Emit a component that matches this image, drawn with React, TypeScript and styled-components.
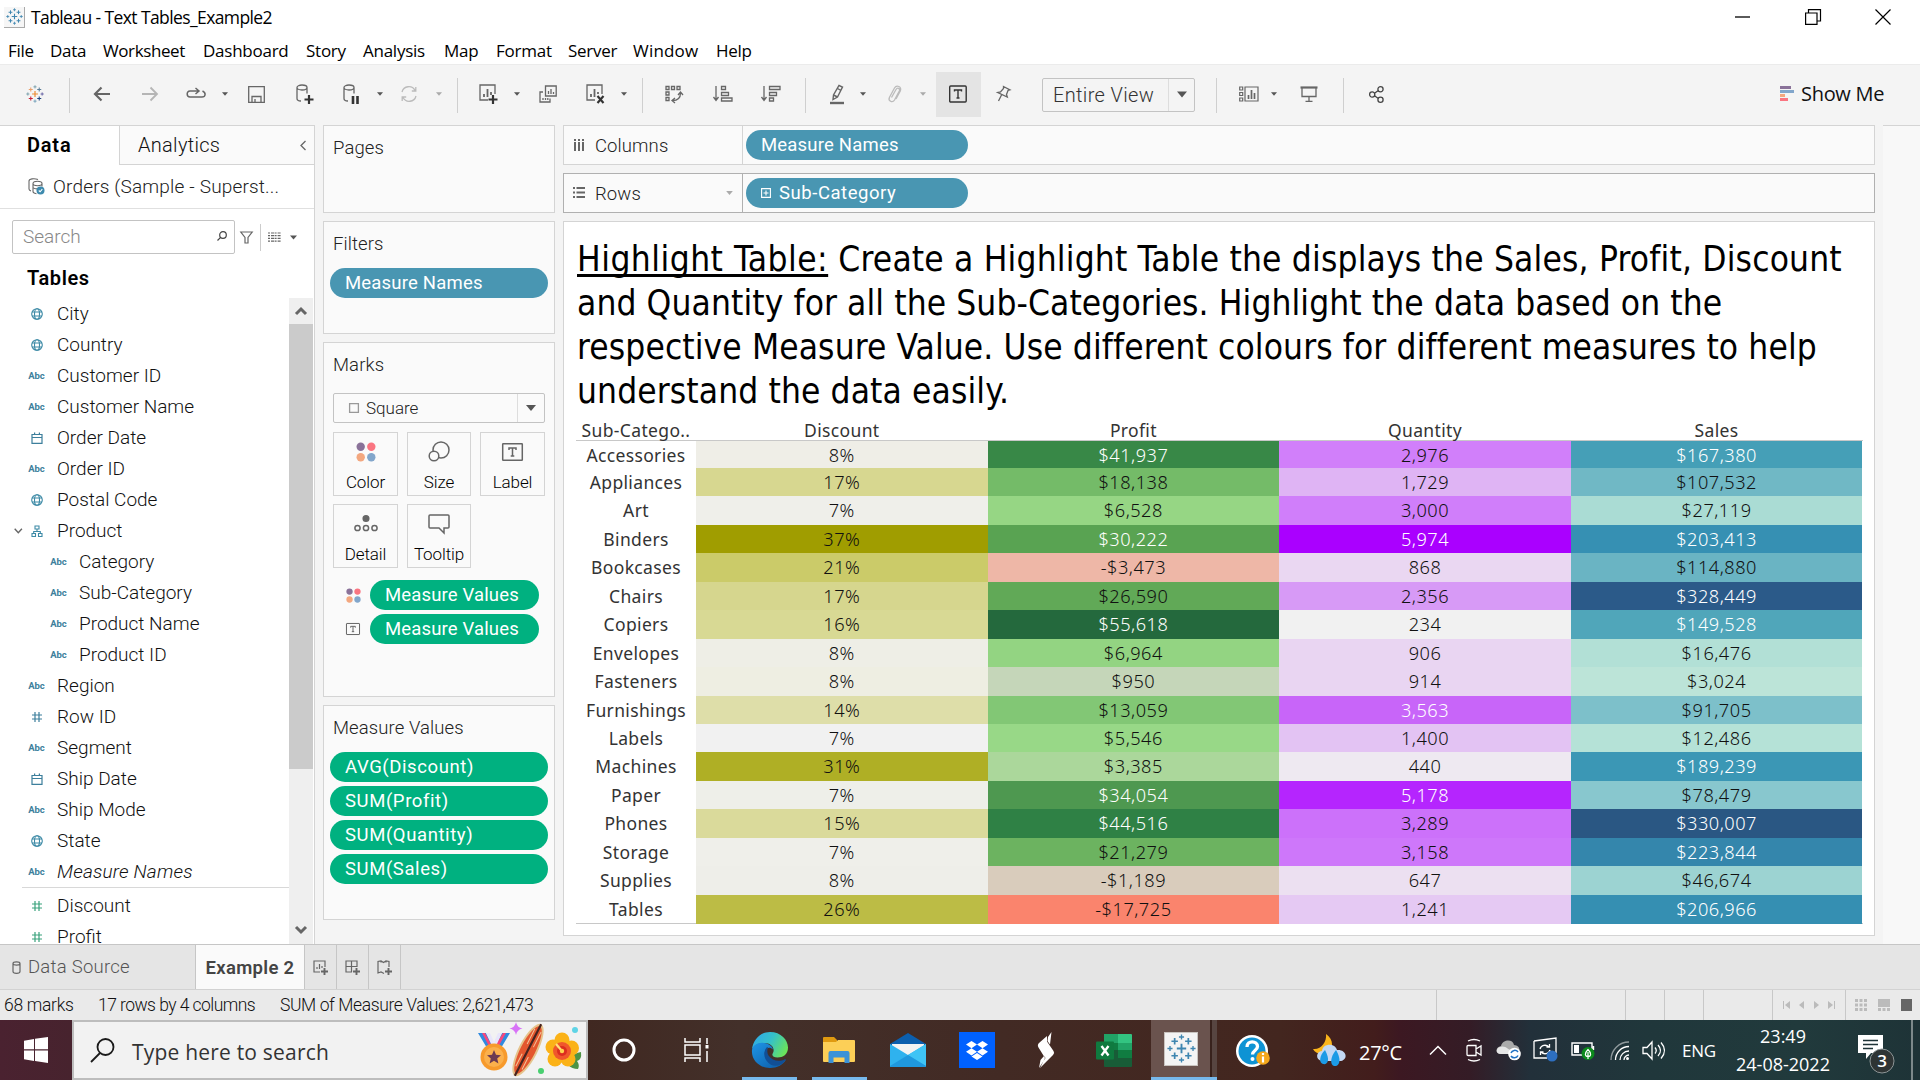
import React from 'react';
import styled, { createGlobalStyle, css } from 'styled-components';

const UI = '"Roboto", "Open Sans", sans-serif';
const SYS = '"Open Sans", "Noto Sans", sans-serif';

const Global = createGlobalStyle`
  *, *::before, *::after { box-sizing: border-box; }
  html, body { margin: 0; padding: 0; }
  body { width: 1920px; height: 1080px; overflow: hidden; background: #f4f4f4; font-family: ${UI}; color: #111; }
  svg { display: block; flex: none; overflow: visible; }
`;

const Screen = styled.div`
  width: 1920px;
  height: 1080px;
  display: flex;
  flex-direction: column;
  overflow: hidden;
  white-space: nowrap;
`;

/* ---------- title bar and menu ---------- */
const TitleBar = styled.header`
  height: 34px;
  display: flex;
  align-items: center;
  padding-left: 4px;
  background: #fff;
  font: 400 17.5px/34px ${SYS};
  letter-spacing: -0.6px;
  color: #000;
`;
const AppBadge = styled.span`
  width: 21px;
  height: 21px;
  display: flex;
  align-items: center;
  justify-content: center;
  background: #f6f6f6;
  border-right: 1px solid #aaa;
  border-bottom: 1px solid #aaa;
  margin-right: 6px;
`;
const WindowTitle = styled.span`
  flex: 1;
`;
const WindowButtons = styled.div`
  display: flex;
  gap: 54px;
  align-items: center;
  padding-right: 29px;
`;
const MenuBar = styled.nav`
  height: 30px;
  display: flex;
  background: #fff;
  padding-left: 8px;
  font: 400 17px/33px ${SYS};
  color: #000;
`;
const MenuItem = styled.span<{ $w: number; $ls?: number }>`
  width: ${p => p.$w}px;
  letter-spacing: ${p => p.$ls ?? -0.25}px;
`;

/* ---------- toolbar ---------- */
const ToolBar = styled.div`
  height: 61px;
  display: flex;
  align-items: center;
  background: #f4f4f4;
  border-top: 1px solid #ebebeb;
  padding-bottom: 2px;
`;
const Slot = styled.span<{ $gap: number; $w: number }>`
  flex: none;
  margin-left: ${p => p.$gap}px;
  width: ${p => p.$w}px;
  display: flex;
  justify-content: center;
`;
const Divider = styled.span<{ $gap: number }>`
  flex: none;
  margin-left: ${p => p.$gap}px;
  width: 1px;
  height: 35px;
  margin-top: 3px;
  background: #cfcfcf;
`;
const ActiveTool = styled.span`
  flex: none;
  margin-left: 9px;
  width: 45px;
  height: 45px;
  background: #e4e4e4;
  display: flex;
  align-items: center;
  justify-content: center;
  padding: 0 2px 1px 0;
`;
const ViewSelect = styled.div`
  flex: none;
  margin: 1px 0 0 30px;
  width: 153px;
  height: 34px;
  display: flex;
  border: 1px solid #c3c3c3;
  border-radius: 2px;
  font: 350 20px/33px ${UI};
  letter-spacing: 0.35px;
  color: #333;
`;
const SelectText = styled.span`
  flex: 1;
  padding-left: 10px;
`;
const SelectArrow = styled.span<{ $w: number }>`
  width: ${p => p.$w}px;
  display: flex;
  align-items: center;
  justify-content: center;
  border-left: 1px solid #ddd;
`;
const ShowMe = styled.span`
  margin-left: 7px;
  font: 400 20px/34px ${SYS};
  letter-spacing: -0.3px;
  color: #111;
`;

/* ---------- workspace ---------- */
const Workspace = styled.main`
  height: 819px;
  display: flex;
  align-items: flex-start;
  background: #f4f4f4;
`;
const DataPane = styled.aside`
  width: 315px;
  height: 819px;
  display: flex;
  flex-direction: column;
  background: #fff;
  border-right: 1px solid #d4d4d4;
  overflow: hidden;
  flex: none;
`;
const PaneTabs = styled.div`
  height: 40px;
  flex: none;
  display: flex;
  border-top: 1px solid #d4d4d4;
  font-size: 20px;
  line-height: 39px;
`;
const DataTab = styled.span`
  width: 119px;
  padding-left: 27px;
  font-weight: 600;
  letter-spacing: 0.8px;
  color: #000;
`;
const AnalyticsTab = styled.span`
  flex: 1;
  display: flex;
  justify-content: space-between;
  align-items: center;
  padding: 0 8px 0 18px;
  background: #fafafa;
  border-left: 1px solid #d4d4d4;
  border-bottom: 1px solid #d4d4d4;
  font-weight: 350;
  letter-spacing: 0.3px;
`;
const SourceRow = styled.div`
  height: 44px;
  flex: none;
  display: flex;
  align-items: center;
  gap: 8px;
  padding-left: 28px;
  border-bottom: 1px solid #e0e0e0;
  font-size: 19px;
  font-weight: 300;
  letter-spacing: 0.17px;
  color: #222;
`;
const SearchRow = styled.div`
  height: 34px;
  flex: none;
  margin: 11px 0 0 12px;
  display: flex;
  align-items: center;
`;
const SearchBox = styled.div`
  width: 223px;
  height: 34px;
  display: flex;
  align-items: center;
  justify-content: space-between;
  padding: 0 7px 2px 10px;
  border: 1px solid #c3c3c3;
  border-radius: 2px;
  font-size: 19px;
  font-weight: 300;
  color: #888;
`;
const ThinRule = styled.span`
  width: 1px;
  height: 27px;
  margin: 0 7px;
  background: #ccc;
`;
const FieldArea = styled.div`
  flex: 1;
  display: flex;
  justify-content: space-between;
`;
const TablesTitle = styled.h2`
  margin: 0;
  height: 44px;
  flex: none;
  padding-left: 27px;
  font-size: 20px;
  font-weight: 600;
  line-height: 48px;
  letter-spacing: 0.6px;
  color: #000;
`;
const FieldList = styled.ul`
  margin: 0;
  padding: 0;
  list-style: none;
`;
const Field = styled.li<{ $child?: boolean; $em?: boolean }>`
  height: 31px;
  width: 289px;
  display: flex;
  align-items: center;
  padding-left: ${p => (p.$child ? 36 : 14)}px;
  font-size: 19px;
  font-weight: 350;
  line-height: 30px;
  letter-spacing: ${p => (p.$em ? 0.2 : 0)}px;
  ${p => p.$em && css`font-style: italic;`}
`;
const Expander = styled.span`
  width: 14px;
  flex: none;
  display: flex;
`;
const TypeIcon = styled.span`
  width: 17px;
  flex: none;
  display: flex;
  justify-content: center;
  margin-right: 12px;
`;
const Abc = styled.span`
  font: normal 700 9.5px/31px ${UI};
  letter-spacing: -0.1px;
  color: #3d7f9c;
`;
const FieldRule = styled.li`
  height: 1px;
  margin: 0 0 2px 22px;
  background: #d8d8d8;
`;
const ScrollBar = styled.div`
  width: 24px;
  margin-right: 1px;
  display: flex;
  flex-direction: column;
  align-items: center;
  background: #efefef;
`;
const ScrollButton = styled.span`
  height: 26px;
  display: flex;
  align-items: center;
`;
const ScrollThumb = styled.span`
  width: 24px;
  height: 445px;
  margin-bottom: 148px;
  background: #cbcbcb;
`;

const CardColumn = styled.section`
  width: 232px;
  margin-left: 8px;
  flex: none;
  display: flex;
  flex-direction: column;
  gap: 8px;
`;
const Card = styled.div<{ $h: number }>`
  height: ${p => p.$h}px;
  border: 1px solid #d4d4d4;
  background: #fafafa;
  padding: 0 6px;
`;
const CardTitle = styled.div`
  padding-left: 3px;
  height: 46px;
  font-size: 18.5px;
  font-weight: 300;
  line-height: 45px;
  letter-spacing: 0.1px;
  color: #222;
`;
const Pill = styled.div<{ $w: number; $green?: boolean; $ls?: number }>`
  width: ${p => p.$w}px;
  height: 30px;
  flex: none;
  border-radius: 15px;
  display: flex;
  align-items: center;
  gap: 8px;
  padding-left: 15px;
  background: ${p => (p.$green ? '#00b180' : '#4996b2')};
  color: #fff;
  font: 400 18.5px/31px ${UI};
  letter-spacing: ${p => p.$ls ?? 0.2}px;
`;
const PillStack = styled.div`
  display: flex;
  flex-direction: column;
  gap: 4px;
`;
const PillRow = styled.div`
  display: flex;
  align-items: center;
  padding-left: 16px;
`;
const PillIcon = styled.span`
  width: 24px;
  display: flex;
`;
const MarkSelect = styled.div`
  width: 212px;
  height: 30px;
  margin: 4px 0 9px 3px;
  display: flex;
  align-items: stretch;
  border: 1px solid #c3c3c3;
  border-radius: 2px;
  font-size: 17px;
  font-weight: 300;
  line-height: 28px;
  color: #222;
`;
const MarkName = styled.span`
  flex: 1;
  display: flex;
  align-items: center;
  gap: 7px;
  padding-left: 15px;
`;
const MarkGrid = styled.div`
  display: grid;
  grid-template-columns: 65px 64px 65px;
  grid-auto-rows: 64px;
  gap: 8px 9px;
  padding-left: 3px;
  margin-bottom: 12px;
`;
const MarkButton = styled.div`
  display: flex;
  flex-direction: column;
  align-items: center;
  justify-content: space-between;
  border: 1px solid #d4d4d4;
  font-size: 17px;
  font-weight: 350;
  line-height: 24px;
  letter-spacing: -0.1px;
  color: #000;
  padding-bottom: 1px;
`;
const MarkIcon = styled.span`
  height: 38px;
  display: flex;
  align-items: center;
`;

const ViewColumn = styled.section`
  width: 1312px;
  margin-left: 8px;
  flex: none;
  display: flex;
  flex-direction: column;
  gap: 8px;
`;
const Shelf = styled.div<{ $dark?: boolean }>`
  height: 40px;
  display: flex;
  align-items: center;
  border: 1px solid ${p => (p.$dark ? '#b0b0b0' : '#d4d4d4')};
  background: #fafafa;
`;
const ShelfLabel = styled.div<{ $dark?: boolean }>`
  width: 179px;
  height: 38px;
  margin-right: 3px;
  display: flex;
  align-items: center;
  gap: 10px;
  padding: 0 9px;
  border-right: 1px solid ${p => (p.$dark ? '#b0b0b0' : '#d4d4d4')};
  font-size: 18.5px;
  font-weight: 300;
  line-height: 38px;
  letter-spacing: 0.1px;
  color: #222;
`;
const ShelfName = styled.span`
  flex: 1;
  padding-top: 1px;
`;
const Viz = styled.article`
  height: 715px;
  border: 1px solid #d4d4d4;
  background: #fff;
  padding: 15px 11px 0 12px;
`;
const VizTitle = styled.h1`
  margin: 0;
  padding-left: 1px;
  font: 400 35px/44px "DejaVu Sans Condensed", "DejaVu Sans", sans-serif;
  font-stretch: condensed;
  color: #000;
`;
const TitleLine = styled.span<{ $ls: number }>`
  display: block;
  letter-spacing: ${p => p.$ls}px;
`;
const Underlined = styled.span`
  letter-spacing: 0.47px;
  text-decoration: underline;
  text-decoration-thickness: 3px;
  text-underline-offset: 3px;
  text-decoration-skip-ink: none;
`;
const HeatRow = styled.div<{ $first?: boolean }>`
  height: ${p => (p.$first ? '27px' : '28.44px')};
  display: grid;
  grid-template-columns: 120px repeat(4, 291.6px);
  line-height: ${p => (p.$first ? '28px' : '29.5px')};
`;
const HeadRow = styled(HeatRow)`
  height: 28px;
  border-bottom: 1px solid #c8c8c8;
  font: 400 17.5px/34px "Noto Sans", sans-serif;
  letter-spacing: 0.35px;
  color: #333;
  text-align: center;
`;
const RowName = styled.span`
  font-family: "Noto Sans", sans-serif;
  font-size: 17.5px;
  letter-spacing: 0.35px;
  color: #333;
  text-align: center;
`;
const HeatCell = styled.span<{ $bg: string; $light?: boolean }>`
  background: ${p => p.$bg};
  color: ${p => (p.$light ? '#fff' : '#111')};
  font-family: "Noto Sans", sans-serif;
  font-size: 18.2px;
  font-weight: 300;
  letter-spacing: 0.5px;
  text-align: center;
`;
const Heat = styled.div`
  height: 483px;
  border-bottom: 1px solid #c8c8c8;
`;
const SideStrip = styled.div`
  flex: 1;
  margin-left: 8px;
  height: 819px;
  border-top: 1px solid #d4d4d4;
  background: #f8f8f8;
`;

/* ---------- sheet tabs and status ---------- */
const SheetTabs = styled.div`
  height: 46px;
  flex: none;
  display: flex;
  background: #e5e5e5;
  border-top: 1px solid #c6c6c6;
  border-bottom: 1px solid #d2d2d2;
  line-height: 46px;
  font-size: 18.5px;
`;
const SourceTab = styled.span`
  width: 195px;
  display: flex;
  align-items: center;
  gap: 7px;
  padding-left: 12px;
  font-weight: 350;
  letter-spacing: 0.25px;
  color: #555;
`;
const ActiveSheet = styled.span`
  width: 109px;
  text-align: center;
  background: #fafafa;
  border-left: 1px solid #c6c6c6;
  font-weight: 600;
  color: #444;
  letter-spacing: 0.3px;
`;
const NewSheet = styled.span`
  width: 32px;
  display: flex;
  align-items: center;
  justify-content: center;
  border-left: 1px solid #c6c6c6;
  &:last-child { width: 33px; border-right: 1px solid #c6c6c6; }
`;
const StatusBar = styled.footer`
  height: 30px;
  flex: none;
  display: flex;
  background: #eaeaea;
  padding-left: 4px;
  font-size: 17.5px;
  font-weight: 350;
  line-height: 30px;
  letter-spacing: -0.42px;
`;
const StatusText = styled.span<{ $w: number; $ls?: number }>`
  width: ${p => p.$w}px;
  letter-spacing: ${p => p.$ls ?? -0.4}px;
`;
const StatusCell = styled.span<{ $w: number }>`
  width: ${p => p.$w}px;
  display: flex;
  align-items: center;
  justify-content: space-evenly;
  border-left: 1px solid #c8c8c8;
`;
const ViewModes = styled(StatusCell)`
  justify-content: flex-start;
  gap: 11px;
  padding-left: 9px;
`;

/* ---------- taskbar ---------- */
const TaskBar = styled.div`
  height: 60px;
  flex: none;
  display: flex;
  align-items: stretch;
  color: #fff;
  background: linear-gradient(90deg, #4a2230 0, #47232e 72px, #402821 588px, #43302a 740px, #422a24 1000px, #43261f 1280px, #421d1c 1375px, #3c1822 1400px, #341c26 1470px, #22303a 1530px, #20373b 1650px, #213a3c 1800px, #1e3337 1920px);
`;
const Start = styled.span`
  flex: none;
  width: 72px;
  display: flex;
  align-items: center;
  justify-content: center;
`;
const TaskSearch = styled.div`
  width: 516px;
  flex: none;
  display: flex;
  align-items: center;
  padding-left: 16px;
  background: #f2f2f2;
  border: 2px solid #bdbdbd;
`;
const TaskSearchText = styled.span`
  flex: none;
  width: 361px;
  padding-left: 17px;
  padding-top: 4px;
  font: 400 21px/30px ${SYS};
  letter-spacing: 0.2px;
  color: #333;
`;
const Task = styled.span<{ $w: number; $bar?: number }>`
  width: ${p => p.$w}px;
  flex: none;
  display: flex;
  align-items: center;
  justify-content: center;
  ${p => p.$bar && css`background: linear-gradient(#76b9ed, #76b9ed) center bottom / ${p.$bar}px 3px no-repeat;`}
`;
const ActiveTask = styled.span`
  width: 66px;
  flex: none;
  margin-left: 5px;
  display: flex;
  align-items: center;
  padding-left: 13px;
  background: linear-gradient(90deg, #6a534e 59px, #38221d 59px, #38221d 61px, #574541 61px);
  border-bottom: 3px solid #76b9ed;
`;
const AppTile = styled.span`
  width: 34px;
  height: 34px;
  display: flex;
  align-items: center;
  justify-content: center;
  background: #f4f4f4;
  border: 1px solid #c9c4c0;
`;
const Tray = styled.div`
  flex: 1;
  display: flex;
  align-items: center;
  font: 400 18px/28px ${SYS};
`;
const TrayItem = styled.span<{ $gap: number; $w: number }>`
  flex: none;
  margin-left: ${p => p.$gap}px;
  width: ${p => p.$w}px;
  display: flex;
  justify-content: center;
`;
const Temperature = styled.span`
  flex: none;
  width: 44px;
  margin: 5px 0 0 13px;
  font-size: 20px;
  letter-spacing: -0.3px;
`;
const Lang = styled.span`
  flex: none;
  width: 34px;
  margin: 2px 0 0 17px;
  font-size: 17px;
  letter-spacing: -0.3px;
`;
const Clock = styled.div`
  flex: none;
  width: 96px;
  margin-left: 19px;
  display: flex;
  flex-direction: column;
  align-items: center;
`;
const DesktopEdge = styled.span`
  width: 2px;
  height: 60px;
  margin-left: 15px;
  background: #7d898b;
`;

/* ---------- icons ---------- */
const Plus = ({ x, y, r, c, w }: { x: number; y: number; r: number; c: string; w: number }) => (
  <path d={`M${x - r} ${y}H${x + r}M${x} ${y - r}V${y + r}`} stroke={c} strokeWidth={w} />
);
const TableauMark = ({ size, mono }: { size: number; mono?: boolean }) => {
  const k = (c: string) => (mono ? '#3f86b0' : c);
  return (
    <svg width={size} height={size} viewBox="0 0 34 34" fill="none">
      <Plus x={17} y={17} r={5.5} c={k('#eb8a2f')} w={2.2} />
      <Plus x={9} y={8.5} r={3.8} c={k('#e9a06b')} w={2} />
      <Plus x={25} y={8.5} r={3.8} c={k('#5c7f98')} w={2} />
      <Plus x={9} y={25.5} r={3.8} c={k('#c72037')} w={2} />
      <Plus x={25} y={25.5} r={3.8} c={k('#1f447e')} w={2} />
      <Plus x={17} y={3.5} r={3} c={k('#7099a6')} w={1.6} />
      <Plus x={17} y={30.5} r={3} c={k('#6a9ab5')} w={1.6} />
      <Plus x={3.5} y={17} r={3} c={k('#7099a6')} w={1.6} />
      <Plus x={30.5} y={17} r={3} c={k('#59549c')} w={1.6} />
    </svg>
  );
};
const Svg = ({ w = 18, h = 18, c = '#666', sw = 1.3, box, children }: { w?: number; h?: number; c?: string; sw?: number; box?: string; children: React.ReactNode }) => (
  <svg width={w} height={h} viewBox={box ?? `0 0 ${w} ${h}`} fill="none" stroke={c} strokeWidth={sw}>{children}</svg>
);
const Caret = ({ w = 6, h = 4, c = '#555' }: { w?: number; h?: number; c?: string }) => (
  <svg width={w} height={h} viewBox="0 0 10 6"><path d="M0 0H10L5 6Z" fill={c} /></svg>
);
const BigPlus = () => <path d="M14 11v9M9.5 15.5h9" stroke="#333" strokeWidth={2.2} />;
const Cylinder = () => <path d="M2 3.5v11c0 1.5 2 2.500 4 2.500M12 3.500v6M2 3.500c0-1.400 2.200-2.500 5-2.500s5 1.100 5 2.500S9.800 6 7 6 2 4.900 2 3.500Z" />;
const Globe = () => (
  <Svg w={12} h={12} c="#3d8aa6" sw={1.1}><circle cx="6" cy="6" r="5.3" /><ellipse cx="6" cy="6" rx="2.5" ry="5.3" /><path d="M1 4h10M1 8h10" /></Svg>
);
const Calendar = () => <Svg w={12} h={12} c="#3d7f9c" sw={1.2}><path d="M1 2.5h10v8.800H1zM1 5.500h10M3.600.5v2M8.400.5v2" /></Svg>;
const Hash = ({ c = '#3d7f9c' }: { c?: string }) => <Svg w={12} h={12} c={c} sw={1.2}><path d="M4 1v10M8 1v10M1 4h10M1 8h10" /></Svg>;
const Hierarchy = () => <Svg w={12} h={12} c="#3d8aa6" sw={1.1}><path d="M4 1h4v3H4zM1 8.500h3.500v3H1zM7.500 8.500H11v3H7.500zM6 4v2.500M2.700 8.500v-2h6.600v2" /></Svg>;
const FourDots = ({ size }: { size: number }) => (
  <svg width={size} height={size} viewBox="0 0 20 20"><circle cx="4.7" cy="4.7" r="4.2" fill="#8a7299" /><circle cx="15.3" cy="4.7" r="4.2" fill="#fa7581" /><circle cx="4.7" cy="15.3" r="4.2" fill="#f3a77f" /><circle cx="15.3" cy="15.3" r="4.2" fill="#82a6cb" /></svg>
);
const LabelT = ({ w = 21, h = 18, c = '#666' }: { w?: number; h?: number; c?: string }) => (
  <Svg w={w} h={h} box="0 0 21 18" c={c} sw={1.5}><rect x="0.7" y="0.7" width="19.6" height="16.6" rx="0.5" /><path d="M7 7V5h7v2M10.500 5v8M8.700 13h3.600" /></Svg>
);

const menus: [string, number, number?][] = [
  ['File', 42], ['Data', 53, -0.3], ['Worksheet', 100, -0.4], ['Dashboard', 103, -0.25], ['Story', 57], ['Analysis', 81], ['Map', 52], ['Format', 72], ['Server', 65], ['Window', 83, 0.2], ['Help', 40],
];

type F = [string, string, boolean?];
const fields: F[] = [
  ['City', 'g'], ['Country', 'g'], ['Customer ID', 'a'], ['Customer Name', 'a'], ['Order Date', 'd'], ['Order ID', 'a'], ['Postal Code', 'g'], ['Product', 'h'],
  ['Category', 'a', true], ['Sub-Category', 'a', true], ['Product Name', 'a', true], ['Product ID', 'a', true],
  ['Region', 'a'], ['Row ID', 'n'], ['Segment', 'a'], ['Ship Date', 'd'], ['Ship Mode', 'a'], ['State', 'g'], ['Measure Names', 'a'],
];
const typeIcon: Record<string, React.ReactNode> = { g: <Globe />, a: <Abc>Abc</Abc>, d: <Calendar />, h: <Hierarchy />, n: <Hash /> };

type Cell = [string, string, boolean?];
const heat: [string, Cell, Cell, Cell, Cell][] = [
  ['Accessories', ['8%', '#efeee7'], ['$41,937', '#388847', true], ['2,976', '#d17ffa'], ['$167,380', '#459fb7', true]],
  ['Appliances', ['17%', '#d7d790'], ['$18,138', '#74bb68'], ['1,729', '#dfb4f4'], ['$107,532', '#70b8c5']],
  ['Art', ['7%', '#efefea'], ['$6,528', '#96d684'], ['3,000', '#d07efa'], ['$27,119', '#aadcd4']],
  ['Binders', ['37%', '#a09d00'], ['$30,222', '#59a352', true], ['5,974', '#aa00ff', true], ['$203,413', '#3690b3', true]],
  ['Bookcases', ['21%', '#cbcb69'], ['-$3,473', '#eeb7a7'], ['868', '#ead7f2'], ['$114,880', '#6ab4c3']],
  ['Chairs', ['17%', '#d6d68e'], ['$26,590', '#61a957'], ['2,356', '#d79af6'], ['$328,449', '#2b5a89', true]],
  ['Copiers', ['16%', '#d8d994'], ['$55,618', '#24693d', true], ['234', '#f1f1f1'], ['$149,528', '#50a6ba', true]],
  ['Envelopes', ['8%', '#eeeee6'], ['$6,964', '#93d482'], ['906', '#e9d5f2'], ['$16,476', '#b2e0d6']],
  ['Fasteners', ['8%', '#eeeee2'], ['$950', '#c5d6b9'], ['914', '#e9d5f2'], ['$3,024', '#bce4d8']],
  ['Furnishings', ['14%', '#dedea9'], ['$13,059', '#82c775'], ['3,563', '#c865f9', true], ['$91,705', '#7dc0ca']],
  ['Labels', ['7%', '#f1f1f1'], ['$5,546', '#98d887'], ['1,400', '#e3c3f3'], ['$12,486', '#b5e2d7']],
  ['Machines', ['31%', '#afaf25'], ['$3,385', '#abd79b'], ['440', '#eee9f1'], ['$189,239', '#3b97b5', true]],
  ['Paper', ['7%', '#eeefe9'], ['$34,054', '#4e9850', true], ['5,178', '#b525fe', true], ['$78,479', '#88c7ce']],
  ['Phones', ['15%', '#dada9b'], ['$44,516', '#2f8145', true], ['3,289', '#cc71fa'], ['$330,007', '#2a5783', true]],
  ['Storage', ['7%', '#efefea'], ['$21,279', '#6cb360'], ['3,158', '#ce77fa'], ['$223,844', '#3486ac', true]],
  ['Supplies', ['8%', '#eeeee9'], ['-$1,189', '#d9ccbc'], ['647', '#ece0f1'], ['$46,674', '#9cd3d2']],
  ['Tables', ['26%', '#bcbc45'], ['-$17,725', '#fa846d'], ['1,241', '#e5c9f3'], ['$206,966', '#358fb2', true]],
];

const Tools = () => (
  <ToolBar>
    <Slot $gap={25} $w={19}><TableauMark size={18} /></Slot>
    <Divider $gap={25} />
    <Slot $gap={23} $w={18}><Svg sw={2.2}><path d="M17 9H2M8.500 2.500 2 9l6.500 6.500" /></Svg></Slot>
    <Slot $gap={30} $w={18}><Svg c="#b5b5b5" sw={1.8}><path d="M1 9h15M9.500 2.500 16 9l-6.500 6.500" /></Svg></Slot>
    <Slot $gap={27} $w={20}><Svg w={20} sw={1.5}><path d="M16.500 6c4 2 3 6-.5 6H4C.5 12 0 6 4 6h8M9.500 3 13 6l-3.500 3" /></Svg></Slot>
    <Slot $gap={15} $w={8}><Caret /></Slot>
    <Slot $gap={19} $w={17}><Svg w={17} h={17}><path d="M.7.7h15.600v15.600H.7zM4 16v-5.500h9V16M7 16v-3" /></Svg></Slot>
    <Slot $gap={30} $w={18}><Svg h={20}><Cylinder /><BigPlus /></Svg></Slot>
    <Slot $gap={29} $w={18}><Svg h={20}><Cylinder /><path d="M11 12v8M15.500 12v8" stroke="#333" strokeWidth={2.6} /></Svg></Slot>
    <Slot $gap={16} $w={8}><Caret /></Slot>
    <Slot $gap={16} $w={18}><Svg c="#bbb"><path d="M2 7a7 7 0 0 1 13-1.500M16 11A7 7 0 0 1 3 12.500M15.800 2v4h-4M2.200 16v-4h4" /></Svg></Slot>
    <Slot $gap={17} $w={8}><Caret c="#aaa" /></Slot>
    <Divider $gap={14} />
    <Slot $gap={20} $w={20}><Svg w={19} h={20}><path d="M9 16H1V1h15v9" /><path d="M5 13v-3M8.500 13V5M12 11V8" strokeWidth={1.8} /><BigPlus /></Svg></Slot>
    <Slot $gap={15} $w={8}><Caret /></Slot>
    <Slot $gap={18} $w={18}><Svg><path d="M6.500 1h10.700v10H6.500zM4 7H1v10h10v-3.500M9.500 9V6M12 9V4M14.500 9V7M4 15v-2M6.500 15v-2M8.800 15v-2" /></Svg></Slot>
    <Slot $gap={28} $w={20}><Svg w={19} h={20}><path d="M9 16H1V1h15v9" /><path d="M5 13v-3M8.500 13V5M12 10V8" strokeWidth={1.8} /><path d="m11.500 12 6 7M17.500 12l-6 7" stroke="#333" strokeWidth={2.1} /></Svg></Slot>
    <Slot $gap={15} $w={8}><Caret /></Slot>
    <Divider $gap={14} />
    <Slot $gap={22} $w={18}><Svg><path d="M1 1.500h3v3H1zM6.500 1.500h3v3h-3zM12 1.500h3v3h-3zM1 7h3v3H1zM1 12.500h3v3H1zM15.500 8c0 5-3 7.500-8 7.500M13 10l2.500-3L18 10M10 13l-3 2.500 3 2.500" /></Svg></Slot>
    <Slot $gap={30} $w={20}><Svg w={20}><path d="M3 1v14M.5 12 3 15.500 5.500 12M8.500 1.500h4v3h-4zM8.500 7.500h7v3h-7zM8.500 13h10.500v3H8.500z" /></Svg></Slot>
    <Slot $gap={28} $w={20}><Svg w={20}><path d="M3 1v14M.5 12 3 15.500 5.500 12M8.500 1.500H19v3H8.500zM8.500 7.500h7v3h-7zM8.500 13h4v3h-4z" /></Svg></Slot>
    <Divider $gap={24} />
    <Slot $gap={23} $w={18}><Svg h={20}><path d="M10 1.500 13.500 3 8.500 13 4 15.500 4.500 11zM4.500 11l4 2M8.500 4.500l3.500 2" strokeWidth={1.4} /><path d="M1 19h14" strokeWidth={2.4} /></Svg></Slot>
    <Slot $gap={12} $w={8}><Caret /></Slot>
    <Slot $gap={19} $w={18}><Svg c="#bbb"><path d="M5.500 12.500 10 4.500c1.500-2.500 4.500-1 3.300 1.600L8.500 15c-2 3.300-6.800 1-5-2.800L8.500 3c2-3.500 7.800-1.500 5.800 3L10 14" /></Svg></Slot>
    <Slot $gap={15} $w={8}><Caret c="#aaa" /></Slot>
    <ActiveTool><Svg c="#333" sw={1.4}><rect x="0.7" y="1" width="16.5" height="16" rx="1" /><path d="M5.500 6.500V5h7v1.500M9 5v8M7.500 13h3" /></Svg></ActiveTool>
    <Slot $gap={13} $w={18}><Svg><path d="m9.500 1.500 6.500 3.300-2 .7-1.500 4 .8 2.500-9.500-4.500L6.500 7l3-3.500zM7.500 10 4.500 16" /></Svg></Slot>
    <ViewSelect><SelectText>Entire View</SelectText><SelectArrow $w={26}><Caret w={10} h={7} /></SelectArrow></ViewSelect>
    <Divider $gap={21} />
    <Slot $gap={21} $w={22}><Svg w={20} h={16} sw={1.2}><path d="M.7 1h3v3h-3zM.7 6.500h3v3h-3zM.7 12h3v3h-3zM6 1h13v14H6z" /><path d="M9.500 13V9M12.500 13V4M15.500 13V7" strokeWidth={1.7} /></Svg></Slot>
    <Slot $gap={10} $w={8}><Caret /></Slot>
    <Slot $gap={21} $w={20}><Svg h={16}><path d="M.5 1.500h17" strokeWidth={2.2} /><path d="M2 2v8.500h14V2M9 10.500V15M5.500 15.300h7" /></Svg></Slot>
    <Divider $gap={24} />
    <Slot $gap={23} $w={18}><Svg w={15} h={17} c="#444"><circle cx="3.2" cy="8.5" r="2.6" /><circle cx="11.5" cy="3.2" r="2.6" /><circle cx="11.5" cy="13.7" r="2.6" /><path d="M5.500 7.200 9 4.700M5.500 9.800 9 12.200" /></Svg></Slot>
    <Slot $gap={394} $w={15}><svg width="14" height="16"><path fill="#8a7299" d="M0 0h11v3H0z" /><path fill="#82a6cb" d="M0 4h14v3H0z" /><path fill="#f3a77f" d="M0 8h5v3H0z" /><path fill="#fa7581" d="M0 12h8v3H0z" /></svg></Slot>
    <ShowMe>Show Me</ShowMe>
  </ToolBar>
);

const Sidebar = () => (
  <DataPane>
    <PaneTabs>
      <DataTab>Data</DataTab>
      <AnalyticsTab>Analytics<Svg w={6} h={9}><path d="M5.500 0 1 4.500 5.500 9" /></Svg></AnalyticsTab>
    </PaneTabs>
    <SourceRow>
      <Svg w={17} h={17} sw={1.1}><path d="M10 1.500C6 0 1 .8 1 3v8c0 1 .7 1.600 2 2M5 5.500v8c0 1.200 2 2 3.500 2.200M5 5.500C5 4 7 3.300 9.500 3.300S14 4 14 5.500 12 7.700 9.500 7.700 5 7 5 5.500zM14 5.500v3M5 9.500c1 1.200 3 1.500 5 1.400" /><circle cx="12.5" cy="12.5" r="4" fill="#3d8aae" stroke="none" /><path d="m10.800 12.500 1.300 1.300 2.200-2.600" stroke="#fff" /></Svg>
      Orders (Sample - Superst...
    </SourceRow>
    <SearchRow>
      <SearchBox>Search<Svg w={10} h={10} c="#444" sw={1.2}><circle cx="6" cy="4" r="3.3" /><path d="M3.600 6.400.5 9.500" /></Svg></SearchBox>
      <Slot $gap={5} $w={13}><Svg w={13} h={13} sw={1.2}><path d="M.8 1h11.400L8 6.500V12H5V6.500z" /></Svg></Slot>
      <ThinRule />
      <Svg w={13} h={10} sw={1.2}><path d="M0 1h13M0 3.700h13M0 6.400h13M0 9.100h13" strokeDasharray="2 1 3 .6" /></Svg>
      <Slot $gap={7} $w={11}><Caret w={7} h={5} /></Slot>
    </SearchRow>
    <TablesTitle>Tables</TablesTitle>
    <FieldArea>
      <FieldList>
        {fields.map(([name, type, child]) => (
          <Field key={name} $child={child} $em={name === 'Measure Names'}>
            <Expander>{type === 'h' && <Svg w={9} h={6} sw={1.4}><path d="m.7.7 3.600 4 3.600-4" /></Svg>}</Expander>
            <TypeIcon>{typeIcon[type]}</TypeIcon>
            {name}
          </Field>
        ))}
        <FieldRule />
        {['Discount', 'Profit'].map(name => (
          <Field key={name}><Expander /><TypeIcon><Hash c="#3aa27c" /></TypeIcon>{name}</Field>
        ))}
      </FieldList>
      <ScrollBar>
        <ScrollButton><Svg w={12} h={8} sw={3}><path d="m1 7 5-5 5 5" /></Svg></ScrollButton>
        <ScrollThumb />
        <ScrollButton><Svg w={12} h={8} sw={3}><path d="m1 1 5 5 5-5" /></Svg></ScrollButton>
      </ScrollBar>
    </FieldArea>
  </DataPane>
);

const Cards = () => (
  <CardColumn>
    <Card $h={88}><CardTitle>Pages</CardTitle></Card>
    <Card $h={113}><CardTitle>Filters</CardTitle><Pill $w={218}>Measure Names</Pill></Card>
    <Card $h={355}>
      <CardTitle>Marks</CardTitle>
      <MarkSelect>
        <MarkName><Svg w={10} h={10} c="#999"><path d="M.6.6h8.800v8.800H.6z" /></Svg>Square</MarkName>
        <SelectArrow $w={27}><Caret w={10} h={6} /></SelectArrow>
      </MarkSelect>
      <MarkGrid>
        <MarkButton><MarkIcon><FourDots size={20} /></MarkIcon>Color</MarkButton>
        <MarkButton><MarkIcon><Svg w={22} h={21} sw={1.5}><circle cx="13" cy="9" r="8" /><circle cx="6" cy="15" r="4.8" fill="#fafafa" /></Svg></MarkIcon>Size</MarkButton>
        <MarkButton><MarkIcon><LabelT /></MarkIcon>Label</MarkButton>
        <MarkButton><MarkIcon><Svg w={24} h={17} sw={1.5}><circle cx="12" cy="3.5" r="2.8" fill="#666" /><circle cx="3.5" cy="13" r="2.6" /><circle cx="12" cy="13" r="2.6" /><circle cx="20.5" cy="13" r="2.6" /></Svg></MarkIcon>Detail</MarkButton>
        <MarkButton><MarkIcon><Svg w={22} h={20} sw={1.5}><path d="M2 1h18q1 0 1 1v11q0 1-1 1h-4v5l-5-5H2q-1 0-1-1V2q0-1 1-1z" /></Svg></MarkIcon>Tooltip</MarkButton>
      </MarkGrid>
      <PillStack>
        <PillRow><PillIcon><FourDots size={15} /></PillIcon><Pill $w={169} $green $ls={0.15}>Measure Values</Pill></PillRow>
        <PillRow><PillIcon><LabelT w={14} h={12} /></PillIcon><Pill $w={169} $green $ls={0.15}>Measure Values</Pill></PillRow>
      </PillStack>
    </Card>
    <Card $h={215}>
      <CardTitle>Measure Values</CardTitle>
      <PillStack>
        {['AVG(Discount)', 'SUM(Profit)', 'SUM(Quantity)', 'SUM(Sales)'].map(t => <Pill key={t} $w={218} $green $ls={0.6}>{t}</Pill>)}
      </PillStack>
    </Card>
  </CardColumn>
);

const Sheet = () => (
  <ViewColumn>
    <Shelf>
      <ShelfLabel>
        <Svg w={12} h={12} sw={2}><path d="M2 3v9M6 3v9M10 3v9M2 0v2M6 0v2M10 0v2" /></Svg><ShelfName>Columns</ShelfName>
      </ShelfLabel>
      <Pill $w={222}>Measure Names</Pill>
    </Shelf>
    <Shelf $dark>
      <ShelfLabel $dark>
        <Svg w={12} h={12} sw={2}><path d="M3.500 1H12M3.500 5.500H12M3.500 10H12M0 1h2M0 5.500h2M0 10h2" /></Svg><ShelfName>Rows</ShelfName><Caret w={7} h={4} c="#aaa" />
      </ShelfLabel>
      <Pill $w={222} $ls={0.55}><Svg w={10} h={10} c="#fff" sw={1.1}><path d="M.6.6h8.800v8.800H.6zM5 2.500v5M2.500 5h5" /></Svg>Sub-Category</Pill>
    </Shelf>
    <Viz>
      <VizTitle>
        <TitleLine $ls={0.17}><Underlined>Highlight Table:</Underlined> Create a Highlight Table the displays the Sales, Profit, Discount</TitleLine>
        <TitleLine $ls={0.09}>and Quantity for all the Sub-Categories. Highlight the data based on the</TitleLine>
        <TitleLine $ls={0.11}>respective Measure Value. Use different colours for different measures to help</TitleLine>
        <TitleLine $ls={0.11}>understand the data easily.</TitleLine>
      </VizTitle>
      <HeadRow><span>Sub-Catego..</span><span>Discount</span><span>Profit</span><span>Quantity</span><span>Sales</span></HeadRow>
      <Heat>
        {heat.map(([name, ...cells], i) => (
          <HeatRow key={name} $first={i === 0}>
            <RowName>{name}</RowName>
            {cells.map(([text, bg, light], j) => <HeatCell key={j} $bg={bg} $light={light}>{text}</HeatCell>)}
          </HeatRow>
        ))}
      </Heat>
    </Viz>
  </ViewColumn>
);

const Bottom = () => (
  <>
    <SheetTabs>
      <SourceTab><Svg w={9} h={13} sw={1.2}><path d="M1 2.500v8c0 2.500 7 2.500 7 0v-8C8 .3 1 .3 1 2.500s7 2.200 7 0" /></Svg>Data Source</SourceTab>
      <ActiveSheet>Example 2</ActiveSheet>
      <NewSheet><Svg w={15} h={15} sw={1.2}><path d="M7 12H1V1h11v6M4 9V7M6.500 9V4M9 8V6" /><path d="M11.500 8v7M8 11.500h7" strokeWidth={1.9} /></Svg></NewSheet>
      <NewSheet><Svg w={15} h={15} sw={1.2}><path d="M7 12H1V1h11v6M6.500 1v11M1 6.500h11" /><path d="M11.500 8v7M8 11.500h7" strokeWidth={1.9} /></Svg></NewSheet>
      <NewSheet><Svg w={15} h={15} sw={1.2}><path d="M7 13.500 4 12 1 13V1.500L4 1l2.500 1.500L9 1l3 .5V7M4 1v1.500M9 1v1.500" /><path d="M11.500 8v7M8 11.500h7" strokeWidth={1.9} /></Svg></NewSheet>
    </SheetTabs>
    <StatusBar>
      <StatusText $w={94} $ls={-0.3}>68 marks</StatusText>
      <StatusText $w={182} $ls={-0.55}>17 rows by 4 columns</StatusText>
      <StatusText $w={1156}>SUM of Measure Values: 2,621,473</StatusText>
      <StatusCell $w={189} /><StatusCell $w={39} /><StatusCell $w={39} /><StatusCell $w={69} />
      <StatusCell $w={73}>
        <svg width="7" height="8" fill="#bbb"><path d="M0 0h1v8H0zM7 0v8L2 4z" /></svg>
        <svg width="5" height="8" fill="#bbb"><path d="M5 0v8L0 4z" /></svg>
        <svg width="5" height="8" fill="#bbb"><path d="M0 0v8l5-4z" /></svg>
        <svg width="7" height="8" fill="#bbb"><path d="M6 0h1v8H6zM0 0v8l5-4z" /></svg>
      </StatusCell>
      <ViewModes $w={75}>
        <svg width="12" height="12" fill="#bbb"><path d="M0 0h3v3H0zM4.500 0h3v3h-3zM9 0h3v3H9zM0 4.500h3v3H0zM4.500 4.500h3v3h-3zM9 4.500h3v3H9zM0 9h3v3H0zM4.500 9h3v3h-3zM9 9h3v3H9z" /></svg>
        <svg width="12" height="12" fill="#bbb"><path d="M0 0h12v8H0zM0 9h3v3H0zM4.500 9h3v3h-3zM9 9h3v3H9z" /></svg>
        <svg width="12" height="12" fill="#666"><path d="M0 0h11v12H0z" /></svg>
      </ViewModes>
    </StatusBar>
  </>
);

const Festive = () => (
  <svg width="106" height="56" viewBox="0 0 106 56">
    <path d="M2 11h8l9 17-5 3zM34 11h-8l-9 17 5 3z" fill="#2f8ae0" />
    <path d="M6 11h3l9 17-2 2zM27 11h3L20 29l-3-2z" fill="#f5477e" />
    <path d="M10 11h4l4 9-2 4zM22 11h4l-6 13-2-4z" fill="#e8e6fb" />
    <circle cx="18" cy="35" r="13.500" fill="#f79a2c" /><circle cx="18" cy="35" r="10" fill="#fbb04c" />
    <path d="m18 28 2 4.800 5 .4-3.800 3.300 1.200 5-4.400-2.700-4.400 2.700 1.200-5L11 33.200l5-.4z" fill="#6b3a52" />
    <path d="M40 0q1 5.500 6.500 6.500Q41 7.500 40 13q-1-5.500-6.500-6.500Q39 5.500 40 0z" fill="#d873f7" />
    <g transform="rotate(27 52 28)"><ellipse cx="52" cy="28" rx="9.500" ry="29" fill="#e5c48d" /><ellipse cx="52" cy="28" rx="7.500" ry="26.500" fill="#e4572e" /><path d="M52-1v58" stroke="#47231f" strokeWidth="2.200" /><path d="M48.500 6v17M55.500 6v17M48.500 34v14M55.500 34v14" stroke="#f3c39b" strokeWidth="1" /></g>
    <path d="M92 43q-2-9 5-11l8-2q1 8-4 9 3 4 1 8-6 0-10-4z" fill="#4d9345" />
    <g fill="#fbb217"><circle cx="86" cy="18" r="7.500" /><circle cx="95.500" cy="26" r="7.500" /><circle cx="92" cy="37" r="7.500" /><circle cx="79" cy="37" r="7.500" /><circle cx="77" cy="25" r="7.500" /></g>
    <circle cx="86" cy="29" r="9" fill="#f0572c" /><circle cx="86" cy="29" r="5" fill="#dc2d1f" /><path d="m80 22 6 7" stroke="#ffe07a" strokeWidth="2.200" /><circle cx="86" cy="29" r="2.200" fill="#ffd34d" />
    <circle cx="99" cy="8" r="3" fill="#5fd4e6" /><circle cx="65" cy="49" r="3" fill="#48cf70" />
  </svg>
);

const Taskbar = () => (
  <TaskBar>
    <Start><svg width="24" height="26" viewBox="0 0 24 26" fill="#fff"><path d="M0 3.700 10 2v10.300H0zM11 1.800 24 0v12.300H11zM0 13.500h10V24L0 22.300zM11 13.500h13V26l-13-1.900z" /></svg></Start>
    <TaskSearch>
      <Svg w={25} h={25} c="#1a1a1a" sw={1.8}><circle cx="15.5" cy="9" r="8" /><path d="M10 15 1 24" /></Svg>
      <TaskSearchText>Type here to search</TaskSearchText>
      <Festive />
    </TaskSearch>
    <Task $w={72}><Svg w={24} h={24} c="#fff" sw={3}><circle cx="12" cy="12" r="10" /></Svg></Task>
    <Task $w={73}><Svg w={25} h={24} c="#fff" sw={1.5}><path d="M1 0v4h15V0M1 7h15v10H1zM1 24v-4h15v4M23 0v6M23 13v11" /><path d="M21.500 7h3v3.500h-3z" fill="#fff" stroke="none" /></Svg></Task>
    <Task $w={73} $bar={55}>
      <svg width="36" height="36" viewBox="0 0 36 36">
        <defs>
          <linearGradient id="eg1" x1="0" x2="1" y1="0.2" y2="0.6"><stop offset="0" stopColor="#2fa8e8" /><stop offset="0.5" stopColor="#35c1c8" /><stop offset="1" stopColor="#6be35a" /></linearGradient>
          <linearGradient id="eg2" x1="0" x2="1" y1="0" y2="1"><stop offset="0" stopColor="#1e95e6" /><stop offset="1" stopColor="#0c59a4" /></linearGradient>
        </defs>
        <path d="M0 18C1 7 9 0 18 0c11 0 18 8 18 15.500 0 7-5 10-10.500 10-4 0-6-2-4.800-4 2.800-4.500-.7-10.500-8.700-10.500C6 11 1 14 0 18z" fill="url(#eg1)" />
        <path d="M0 18c1-5 6-8 12-7 5 .6 8 3 9 6.500-3-3-7-2-8 2C11.500 27 19 33 28 30.500L34 28c-3.500 5-9 8-15.500 8C9 36.500-1 29 0 18z" fill="url(#eg2)" />
        <path d="M14.500 15.500c-4 5-2.500 13 4 17 5.500 3 11.500.5 15-4.500.5-.8 0-1.300-.8-.8C28 30 20 29 16.500 23.500c-1.800-2.800-1.200-6-.5-8.500z" fill="#114f96" />
      </svg>
    </Task>
    <Task $w={66} $bar={55}>
      <svg width="32" height="27" viewBox="0 0 32 27"><path d="M0 1q0-1 1-1h10l3 3v4H0z" fill="#e09a10" /><path d="M0 5h13l2-2h16q1 0 1 1v20q0 1-1 1H1q-1 0-1-1z" fill="#fccf57" /><path d="M5.500 26V16q0-2 2-2h17q2 0 2 2v10h-5v-5.500h-11V26z" fill="#3b92d8" /></svg>
    </Task>
    <Task $w={72}>
      <svg width="36" height="34" viewBox="0 0 36 34"><path d="M0 11 18 0l18 11v4H0z" fill="#0c5fae" /><path d="M2 11h32v10L18 24 2 21z" fill="#f3f3f3" /><path d="M0 11l18 11 18-11v22q0 1-1 1H1q-1 0-1-1z" fill="#2fb2ee" /><path d="M36 11 18 22l18 11z" fill="#3fc4f5" /><path d="M18 22l18 11q0 1-1 1H1q-1 0-1-1z" fill="#1f98de" /></svg>
    </Task>
    <Task $w={66}>
      <svg width="36" height="36" viewBox="0 0 36 36"><path fill="#0061ff" d="M0 0h36v36H0z" /><g fill="#fff"><path d="m12.500 9 5.500 3.600-5.500 3.600L7 12.600zM23.500 9l5.500 3.600-5.500 3.600-5.500-3.600zM12.500 16.200l5.500 3.600-5.500 3.600L7 19.800zM23.500 16.200l5.500 3.600-5.500 3.600-5.500-3.600zM18 21l5.500 3.500L18 28l-5.500-3.500z" /></g></svg>
    </Task>
    <Task $w={72}>
      <svg width="18" height="36" viewBox="0 0 18 36" fill="#fff"><path d="M10 4 2 11q-2 2-.5 4.500L8 26 3 36l13-13q2-2 .5-4L10 9.500zM14.500 0 11 5l-.5 4 2.500 3.500zM2 36l1.500-8 3.500-4 1.500 2z" /></svg>
    </Task>
    <Task $w={64}>
      <svg width="36" height="33" viewBox="0 0 36 33"><path d="M8 0h14v9H8z" fill="#21a366" /><path d="M22 0h13q1 0 1 1v8H22z" fill="#33c481" /><path d="M8 9h14v7H8z" fill="#107c41" /><path d="M22 9h14v7H22z" fill="#21a366" /><path d="M8 16h14v8H8z" fill="#185c37" /><path d="M22 16h14v8H22z" fill="#107c41" /><path d="M8 24h28v8q0 1-1 1H9q-1 0-1-1z" fill="#185c37" /><rect y="7.5" width="18" height="18" rx="1" fill="#0f7a3f" /><path d="m5.500 12 7 9.500M12.500 12l-7 9.500" stroke="#fff" strokeWidth="2.3" /></svg>
    </Task>
    <ActiveTask><AppTile><TableauMark size={29} mono /></AppTile></ActiveTask>
    <Tray>
      <TrayItem $gap={18} $w={35}>
        <svg width="34" height="34" viewBox="0 0 34 34"><circle cx="16" cy="18" r="16" fill="#fff" /><circle cx="16" cy="18" r="13.500" fill="#0e93d4" /><path d="M11 14c0-7 10.500-6.500 10.500-.500 0 4-5 4-5 8" fill="none" stroke="#fff" strokeWidth="3.3" /><circle cx="16.5" cy="26" r="2" fill="#fff" /><circle cx="27" cy="25" r="6.800" fill="#f5a81c" /><path d="M27 23.500v6M27 20v2" stroke="#fff" strokeWidth="2.2" /></svg>
      </TrayItem>
      <TrayItem $gap={43} $w={33}>
        <svg width="33" height="32" viewBox="0 0 33 32"><path d="M13 0c8 5 8 16 0 19-6 2-11 0-13-4 8 1 14-7 13-15z" fill="#fbb51c" /><path d="M9 27c-7-1-6-10 0-10 1-8 13-8 15-1 9-1 12 9 4 11z" fill="#c3d8f4" /><path d="M12 16c-6 6-6 13-2 14s8-3 2-14zM23 16c-6 7-6 15-2 16s9-4 2-16z" fill="#1c9be6" /></svg>
      </TrayItem>
      <Temperature>27°C</Temperature>
      <TrayItem $gap={26} $w={18}><Svg w={18} h={9} c="#fff" sw={1.5}><path d="m1 8.500 8-8 8 8" /></Svg></TrayItem>
      <TrayItem $gap={19} $w={17}><Svg w={17} h={22} c="#fff" sw={1.3}><path d="M2 6.500h8v10H2q-1 0-1-1v-8q0-1 1-1zM10 10l5-3v9l-5-3M2 2q6-3 12 0M2 20.500q6 3 12 0" /></Svg></TrayItem>
      <TrayItem $gap={13} $w={26}><svg width="26" height="20" viewBox="0 0 26 20"><path d="M5 14c-6 0-6-7 0-8C7-1 17-1 18 5c7 0 7 9 1 9z" fill="#aaa" /><path d="M5 14c-6 0-5-6-1-7 5-2 8 2 15 7z" fill="#e6e6e6" /><circle cx="18.5" cy="14" r="6.300" fill="#fff" /><path d="M15 13a4 4 0 0 1 7-1M22 15.500a4 4 0 0 1-7 .5" stroke="#2072c4" strokeWidth="1.5" fill="none" /></svg></TrayItem>
      <TrayItem $gap={11} $w={25}><Svg w={25} h={26} c="#fff" sw={1.3}><path d="M1 4 23 1v15M1 4v17h13M7 12c1-4 6-5 9-2M17 13c-1 4-6 5-9 2M16.500 7v3h-3M7.500 18v-3h3" /><circle cx="19" cy="19" r="5.500" fill="#2d6fc0" stroke="none" /></Svg></TrayItem>
      <TrayItem $gap={13} $w={24}><Svg w={24} h={20} c="#fff" sw={1.4}><path d="M1 3h20v12H1zM22.500 6v4" /><path d="M3 5h5v8H3z" fill="#fff" stroke="none" /><circle cx="17" cy="13.5" r="6.500" fill="#0c8a1c" stroke="none" /><path d="M17 9.500c4 4 3 7 0 7s-4-3 0-7zM17 12v7" strokeWidth={1.2} /></Svg></TrayItem>
      <TrayItem $gap={15} $w={19}><Svg w={19} h={19} c="#fff" sw={1.3}><path d="M1 19A18 18 0 0 1 19 1" opacity="0.5" /><path d="M5.500 19A13.500 13.500 0 0 1 19 5.500M10 19a9 9 0 0 1 9-9M14 19a5 5 0 0 1 5-5" /><circle cx="17.5" cy="17.5" r="1.5" fill="#fff" stroke="none" /></Svg></TrayItem>
      <TrayItem $gap={13} $w={23}><Svg w={23} h={19} c="#fff" sw={1.3}><path d="M1 6.500h4L10 1v17l-5-5.500H1zM13 6.500q2.500 3 0 6M16 4q5 5.500 0 11M19 1.500q7 8 0 16" /></Svg></TrayItem>
      <Lang>ENG</Lang>
      <Clock><span>23:49</span><span>24-08-2022</span></Clock>
      <TrayItem $gap={27} $w={38}><svg width="38" height="38" viewBox="0 0 38 38"><path d="M0 4h25v18H13l-5 6v-6H0z" fill="#fff" /><path d="M5 9.500h15M5 13.500h15M5 17.500h10" stroke="#1e3337" strokeWidth="1.3" /><circle cx="24" cy="30" r="12" fill="#2e3434" stroke="#8d9596" /><text x="24" y="36" textAnchor="middle" fill="#fff" fontSize="17" fontWeight="600" fontFamily="Open Sans">3</text></svg></TrayItem>
      <DesktopEdge />
    </Tray>
  </TaskBar>
);

export default function App() {
  return (
    <Screen>
      <Global />
      <TitleBar>
        <AppBadge><TableauMark size={17} mono /></AppBadge>
        <WindowTitle>Tableau - Text Tables_Example2</WindowTitle>
        <WindowButtons>
          <Svg w={16} h={16} c="#000"><path d="M0 8h15" /></Svg>
          <Svg w={16} h={16} c="#000" sw={1.2}><path d="M.6 4h11.400v11.400H.6zM3.500 4V.6h12v11.400H12" /></Svg>
          <Svg w={16} h={16} c="#000" sw={1.2}><path d="m.5.5 15 15M15.500.5l-15 15" /></Svg>
        </WindowButtons>
      </TitleBar>
      <MenuBar>{menus.map(([t, w, ls]) => <MenuItem key={t} $w={w} $ls={ls}>{t}</MenuItem>)}</MenuBar>
      <Tools />
      <Workspace>
        <Sidebar />
        <Cards />
        <Sheet />
        <SideStrip />
      </Workspace>
      <Bottom />
      <Taskbar />
    </Screen>
  );
}
